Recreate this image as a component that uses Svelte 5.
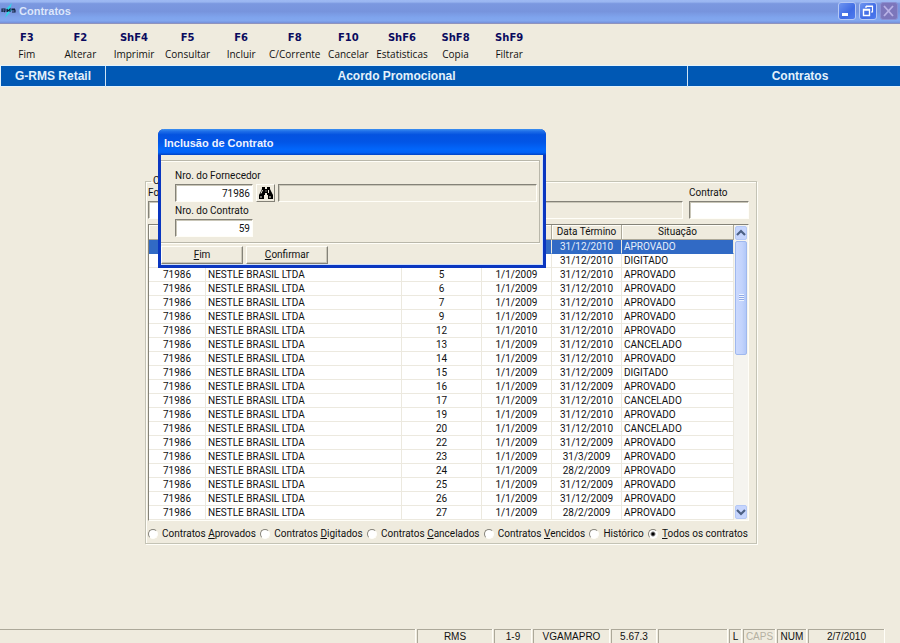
<script lang="ts">
  const commands = [
    { key: "F3", label: "Fim" },
    { key: "F2", label: "Alterar" },
    { key: "ShF4", label: "Imprimir" },
    { key: "F5", label: "Consultar" },
    { key: "F6", label: "Incluir" },
    { key: "F8", label: "C/Corrente" },
    { key: "F10", label: "Cancelar" },
    { key: "ShF6", label: "Estatisticas" },
    { key: "ShF8", label: "Copia" },
    { key: "ShF9", label: "Filtrar" },
  ];

  // contrato, início, término, situação
  const rows = [
    [3, "1/1/2009", "31/12/2010", "APROVADO"],
    [4, "1/1/2009", "31/12/2010", "DIGITADO"],
    [5, "1/1/2009", "31/12/2010", "APROVADO"],
    [6, "1/1/2009", "31/12/2010", "APROVADO"],
    [7, "1/1/2009", "31/12/2010", "APROVADO"],
    [9, "1/1/2009", "31/12/2010", "APROVADO"],
    [12, "1/1/2010", "31/12/2010", "APROVADO"],
    [13, "1/1/2009", "31/12/2010", "CANCELADO"],
    [14, "1/1/2009", "31/12/2010", "APROVADO"],
    [15, "1/1/2009", "31/12/2009", "DIGITADO"],
    [16, "1/1/2009", "31/12/2009", "APROVADO"],
    [17, "1/1/2009", "31/12/2010", "CANCELADO"],
    [19, "1/1/2009", "31/12/2010", "APROVADO"],
    [20, "1/1/2009", "31/12/2010", "CANCELADO"],
    [22, "1/1/2009", "31/12/2009", "APROVADO"],
    [23, "1/1/2009", "31/3/2009", "APROVADO"],
    [24, "1/1/2009", "28/2/2009", "APROVADO"],
    [25, "1/1/2009", "31/12/2009", "APROVADO"],
    [26, "1/1/2009", "31/12/2009", "APROVADO"],
    [27, "1/1/2009", "28/2/2009", "APROVADO"],
  ];

  const filters = [
    { id: "aprovados", pre: "Contratos ", hot: "A", post: "provados" },
    { id: "digitados", pre: "Contratos ", hot: "D", post: "igitados" },
    { id: "cancelados", pre: "Contratos ", hot: "C", post: "ancelados" },
    { id: "vencidos", pre: "Contratos ", hot: "V", post: "encidos" },
    { id: "historico", pre: "Histórico", hot: "", post: "" },
    { id: "todos", pre: "", hot: "T", post: "odos os contratos" },
  ];

  let filter = $state("todos");
  let selected = $state(0);
  let fornecedor = $state("71986");
  let contrato = $state("59");
</script>

<div class="window">
  <header class="titlebar">
    <svg class="app-icon" width="16" height="16" viewBox="0 0 16 16">
      <path d="M11 0L5 6l2 1-3 8 7-8-2-1z" fill="#2fd6e6" />
      <path d="M1 9V6h3v2H1m2 0l1 1M6 9V6l1 2 2-2v3M14 6h-3v1h3v2h-3" fill="none" stroke="#10203c" stroke-width="1.1" />
    </svg>
    <h1>Contratos</h1>
    <div class="win-buttons">
      <button aria-label="Minimizar">
        <svg width="18" height="18" viewBox="0 0 18 18"><rect x="4" y="11" width="6" height="3" fill="#fff" /></svg>
      </button>
      <button aria-label="Restaurar">
        <svg width="18" height="18" viewBox="0 0 18 18" fill="none" stroke="#fff">
          <path d="M7 6V4.500h6.500v5.500H12M7 4h7" stroke-width="1.200" />
          <path d="M4.500 7.500h6v6h-6zM4 8h7" stroke-width="1.400" />
        </svg>
      </button>
      <button class="close" aria-label="Fechar">
        <svg width="18" height="18" viewBox="0 0 18 18"><path d="M4 4l9 10M13 4L4 14" stroke="#b9b2e6" stroke-width="1.800" /></svg>
      </button>
    </div>
  </header>

  <nav class="toolbar">
    {#each commands as cmd}
      <button><b>{cmd.key}</b><span>{cmd.label}</span></button>
    {/each}
  </nav>

  <div class="banner">
    <div class="banner-app">G-RMS Retail</div>
    <div class="banner-title">Acordo Promocional</div>
    <div class="banner-module">Contratos</div>
  </div>

  <main>
    <div class="workspace">
      <fieldset class="group">
        <legend>Contratos</legend>

        <div class="search">
          <div class="field code">
            <label for="s-fornecedor">Fornecedor</label>
            <input id="s-fornecedor" type="text" />
          </div>
          <input class="readonly" type="text" aria-label="Nome do fornecedor" readonly />
          <div class="field number">
            <label for="s-contrato">Contrato</label>
            <input id="s-contrato" type="text" />
          </div>
        </div>

        <div class="grid">
          <table>
            <colgroup>
              <col class="c-code" /><col /><col class="c-num" /><col class="c-date" /><col class="c-date" /><col class="c-status" />
            </colgroup>
            <thead>
              <tr>
                <th>Código</th>
                <th>Fornecedor</th>
                <th>Contrato</th>
                <th>Data Início</th>
                <th>Data Término</th>
                <th>Situação</th>
              </tr>
            </thead>
            <tbody>
              {#each rows as [num, start, end, status], i}
                <tr class:selected={i === selected} onclick={() => (selected = i)}>
                  <td>71986</td>
                  <td class="left">NESTLE BRASIL LTDA</td>
                  <td>{num}</td>
                  <td>{start}</td>
                  <td>{end}</td>
                  <td class="left">{status}</td>
                </tr>
              {/each}
            </tbody>
          </table>
          <div class="scrollbar">
            <button aria-label="Subir">
              <svg width="10" height="8" viewBox="0 0 10 8"><path d="M1 6l4-4 4 4" fill="none" stroke="#4d6185" stroke-width="2.200" /></svg>
            </button>
            <div class="track">
              <div class="thumb"><span></span></div>
            </div>
            <button aria-label="Descer">
              <svg width="10" height="8" viewBox="0 0 10 8"><path d="M1 2l4 4 4-4" fill="none" stroke="#4d6185" stroke-width="2.200" /></svg>
            </button>
          </div>
        </div>

        <div class="filters">
          {#each filters as f}
            <label>
              <input type="radio" name="filtro" value={f.id} bind:group={filter} />
              <span>{f.pre}<u>{f.hot}</u>{f.post}</span>
            </label>
          {/each}
        </div>
      </fieldset>

      <section class="dialog" role="dialog" aria-labelledby="dlg-title">
        <h2 id="dlg-title">Inclusão de Contrato</h2>
        <div class="dialog-body">
          <div class="panel">
            <label for="d-fornecedor">Nro. do Fornecedor</label>
            <div class="line">
              <input id="d-fornecedor" class="value" type="text" bind:value={fornecedor} />
              <button class="find" aria-label="Procurar">
                <svg width="14" height="12" viewBox="0 0 14 12">
                  <path d="M3 0h3v2h2V0h3v2l3 6v4H9V8H8V6H6v2H5v4H0V8l3-6z" fill="#000" />
                  <path d="M3.500 3L2 6.500M9.500 3v3M2 9v2M11 9v2M6.500 4h1" stroke="#efebde" fill="none" />
                </svg>
              </button>
              <input class="readonly" type="text" aria-label="Razão social" readonly />
            </div>
            <label for="d-contrato">Nro. do Contrato</label>
            <div class="line">
              <input id="d-contrato" class="value" type="text" bind:value={contrato} />
            </div>
          </div>
          <div class="actions">
            <button><u>F</u>im</button>
            <button><u>C</u>onfirmar</button>
          </div>
        </div>
      </section>
    </div>
  </main>

  <footer class="status">
    <span class="message"></span>
    <span class="w-75">RMS</span>
    <span class="w-37">1-9</span>
    <span class="w-76">VGAMAPRO</span>
    <span class="w-45">5.67.3</span>
    <span class="w-69"></span>
    <span class="w-12">L</span>
    <span class="w-32 off">CAPS</span>
    <span class="w-29">NUM</span>
    <span class="w-76">2/7/2010</span>
  </footer>
</div>

<style>
  :global(body) {
    margin: 0;
    background: #efebde;
  }

  .window {
    --face: #efebde;
    --shadow: #aca899;
    --dark: #848278;
    --light: #fffef8;
    display: flex;
    flex-direction: column;
    height: 100vh;
    overflow: hidden;
    background: var(--face);
    color: #111;
    font: 10px/12px Roboto, sans-serif;
  }

  .window * {
    box-sizing: border-box;
  }

  button,
  input {
    margin: 0;
    padding: 0;
    font: inherit;
    color: inherit;
    border-radius: 0;
    outline: none;
  }

  .titlebar {
    display: flex;
    flex: none;
    align-items: center;
    height: 24px;
    padding: 0 2px 1px 1px;
    border-bottom: 1px solid #8f93bd;
    background: linear-gradient(#9db9f3 0, #9ab6f1 8%, #7b98e0 16%, #7794dd 50%, #7fa4ed 75%, #82a7ef 90%, #7590da 100%);
  }

  .titlebar h1 {
    flex: 1;
    margin: 0 0 0 2px;
    font: bold 11px/14px "Liberation Sans", sans-serif;
    color: #dce6fb;
  }

  .win-buttons {
    display: flex;
    gap: 3px;
  }

  .win-buttons button {
    display: flex;
    width: 18px;
    height: 18px;
    border: 1px solid #b5c8f6;
    border-radius: 3px;
    background: linear-gradient(135deg, #6f95f0, #3f6be4 60%, #4f7df0);
  }

  .win-buttons svg {
    margin: -1px;
  }

  .win-buttons .close {
    border-color: #8b8fd2;
    background: #7c76bb;
  }

  .toolbar {
    display: flex;
    flex: none;
    max-width: 536px;
    height: 41px;
    padding-top: 7px;
  }

  .toolbar button {
    display: flex;
    flex: 1 1 0;
    flex-direction: column;
    align-items: center;
    gap: 4px;
    min-width: 0;
    border: 0;
    background: none;
    font: 10px/13px "Open Sans", sans-serif;
    white-space: nowrap;
  }

  .toolbar b {
    font: bold 10px/13px "DejaVu Sans", sans-serif;
    color: #0a0a5e;
  }

  .banner {
    display: grid;
    flex: none;
    grid-template-columns: 104px 1fr 213px;
    height: 22px;
    border: solid #e4f3fb;
    border-width: 1px 0 1px 1px;
    background: #0058b4;
    color: #e4f1fb;
    font: bold 12px/21px "Liberation Sans", sans-serif;
    text-align: center;
  }

  .banner div + div {
    border-left: 1px solid #cfe4f4;
  }

  .banner .banner-module {
    padding-left: 12px;
  }

  main {
    flex: 1;
    min-height: 0;
    padding: 88px 0 0 2px;
  }

  .workspace {
    position: relative;
    max-width: 612px;
    margin: 0 auto;
  }

  .group {
    min-width: 0;
    margin: 0;
    padding: 0 7px 3px 2px;
    border: 1px solid #c4c3b5;
    box-shadow: 1px 1px 0 var(--light), inset 1px 1px 0 var(--light);
  }

  .group legend {
    height: 12px;
    margin-left: 3px;
    padding: 0 2px;
  }

  .search {
    display: flex;
    align-items: flex-end;
    gap: 6px;
  }

  .field {
    display: flex;
    flex-direction: column;
    gap: 2px;
  }

  .field.code {
    width: 79px;
  }

  .field.number {
    width: 60px;
  }

  input[type="text"] {
    width: 100%;
    height: 18px;
    padding: 0 2px;
    border: 1px solid;
    border-color: var(--dark) var(--light) var(--light) var(--dark);
    background: #fff;
    box-shadow: inset 1px 1px 0 #c9c6b8;
  }

  input.readonly {
    flex: 1;
    width: auto;
    min-width: 0;
    background: var(--face);
  }

  .grid {
    display: flex;
    margin-top: 5px;
    border: 1px solid;
    border-color: var(--dark) var(--light) var(--light) var(--dark);
    background: #fff;
  }

  table {
    flex: 1;
    min-width: 0;
    table-layout: fixed;
    border-collapse: separate;
    border-spacing: 0;
  }

  .c-code {
    width: 57px;
  }

  .c-num {
    width: 80px;
  }

  .c-date {
    width: 70px;
  }

  .c-status {
    width: 112px;
  }

  th {
    height: 15px;
    padding: 0;
    border-right: 1px solid var(--shadow);
    border-bottom: 1px solid var(--shadow);
    background: var(--face);
    box-shadow: inset 1px 1px 0 var(--light);
    font-weight: normal;
  }

  td {
    height: 14px;
    padding: 0;
    overflow: hidden;
    border-right: 1px solid #ece9df;
    border-bottom: 1px solid #ece9df;
    text-align: center;
    white-space: nowrap;
  }

  td.left {
    padding-left: 2px;
    text-align: left;
  }

  tr.selected td {
    border-bottom-color: #316ac5;
    background: #316ac5;
    color: #e6eefa;
  }

  .scrollbar {
    display: flex;
    flex: none;
    flex-direction: column;
    width: 14px;
    padding: 1px;
    background: #f5f4ef;
  }

  .scrollbar button {
    display: flex;
    align-items: center;
    justify-content: center;
    height: 14px;
    border: 1px solid #b4c8f6;
    border-radius: 2px;
    background: #c6d5fd;
  }

  .track {
    flex: 1;
  }

  .thumb {
    display: flex;
    align-items: center;
    justify-content: center;
    height: 43%;
    margin-top: 1px;
    border: 1px solid #9fb8ee;
    border-radius: 2px;
    background: linear-gradient(90deg, #cbd9fe, #c2d3fc 60%, #b2c8f8);
  }

  .thumb span {
    width: 5px;
    height: 7px;
    background: repeating-linear-gradient(#eef4fe 0 1px, #8fa9e6 1px 2px);
  }

  .filters {
    display: flex;
    justify-content: space-between;
    margin-top: 7px;
    padding-right: 1px;
  }

  .filters label {
    display: flex;
    align-items: center;
    gap: 4px;
    white-space: nowrap;
  }

  input[type="radio"] {
    width: 10px;
    height: 10px;
    border: 1px solid;
    border-color: var(--dark) var(--light) var(--light) var(--dark);
    border-radius: 50%;
    background: #fff;
    appearance: none;
  }

  input[type="radio"]:checked {
    background: radial-gradient(circle, #000 0 1px, #fff 3px);
  }

  .dialog {
    position: absolute;
    top: -46px;
    left: 13px;
    width: 388px;
    border: solid #0a36c0;
    border-width: 0 3px 3px;
    border-radius: 6px 6px 0 0;
    background: var(--face);
  }

  .dialog h2 {
    height: 26px;
    margin: 0 -3px;
    padding-left: 6px;
    border-radius: 6px 6px 0 0;
    background: linear-gradient(#3b8ff0 0, #1c6ce8 10%, #0453e0 22%, #0255e6 50%, #0266fb 78%, #0262f6 90%, #0142c4 100%);
    color: #eef3ff;
    font: bold 11px/29px "Liberation Sans", sans-serif;
  }

  .dialog-body {
    border: solid #cfe0fa;
    border-width: 0 1px 1px 0;
  }

  .panel {
    margin: 5px 2px 0 0;
    padding: 9px 2px 5px 14px;
    border: 1px solid #b9b7aa;
    border-left: 0;
    box-shadow: inset 0 1px 0 var(--light), 0 1px 0 var(--light);
  }

  .panel label {
    display: block;
    margin-bottom: 2px;
  }

  .line {
    display: flex;
    gap: 3px;
  }

  .line + label {
    margin-top: 3px;
  }

  .panel .value {
    width: 78px;
    text-align: right;
  }

  .find {
    display: flex;
    align-items: center;
    justify-content: center;
    width: 19px;
    height: 18px;
    border: 1px solid;
    border-color: var(--light) var(--dark) var(--dark) var(--light);
    background: var(--face);
  }

  .actions {
    display: flex;
    gap: 3px;
    padding-top: 3px;
  }

  .actions button {
    width: 82px;
    height: 18px;
    border: 1px solid;
    border-color: var(--light) var(--dark) var(--dark) var(--light);
    background: var(--face);
    box-shadow: inset -1px -1px 0 #c9c6b8;
  }

  .status {
    display: flex;
    flex: none;
    gap: 2px;
    height: 14px;
    padding-right: 16px;
    font: 10px/12px "Liberation Sans", sans-serif;
    text-align: center;
  }

  .status span {
    padding-top: 1px;
    border: solid var(--shadow);
    border-width: 1px 0 0 1px;
    box-shadow: 1px 0 0 var(--light);
  }

  .status .message {
    flex: 1;
    border-left: 0;
  }

  .status .off {
    color: #b5b1a2;
  }

  .w-12 {
    width: 12px;
  }

  .w-29 {
    width: 29px;
  }

  .w-32 {
    width: 32px;
  }

  .w-37 {
    width: 37px;
  }

  .w-45 {
    width: 45px;
  }

  .w-69 {
    width: 69px;
  }

  .w-75 {
    width: 75px;
  }

  .w-76 {
    width: 76px;
  }
</style>
